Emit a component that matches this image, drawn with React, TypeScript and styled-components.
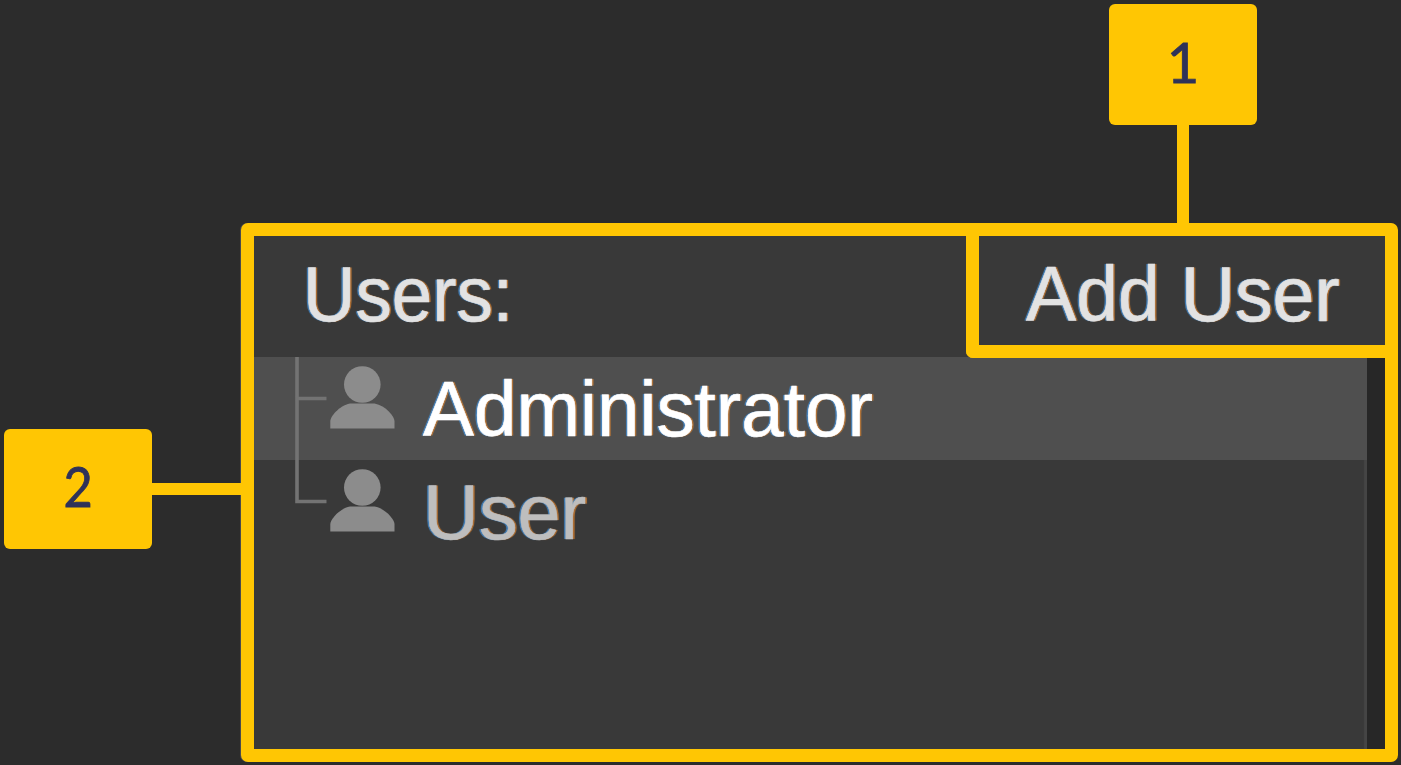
import React from "react";
import styled, { createGlobalStyle } from "styled-components";

const yellow = "#ffc603";

const GlobalStyle = createGlobalStyle`
  *, *::before, *::after { box-sizing: border-box; }
  body { margin: 0; background: #2c2c2c; overflow: hidden; }
`;

const Page = styled.div`
  width: 1401px;
  height: 765px;
  padding: 4px 0 0 4px;
  display: flex;
  flex-direction: column;
  background: #2c2c2c;
  font-family: "Liberation Sans", Arial, sans-serif;
  overflow: hidden;
`;

const Callout = styled.div<{ $vertical?: boolean }>`
  position: relative;
  z-index: 1;
  display: flex;
  flex: none;
  align-items: center;
  flex-direction: ${(p) => (p.$vertical ? "column" : "row")};
  align-self: flex-start;
  margin: ${(p) => (p.$vertical ? "0 0 0 1105px" : "206px 0 0")};
`;

const Badge = styled.div<{ $height: number }>`
  width: 148px;
  height: ${(p) => p.$height}px;
  padding-bottom: 6px;
  display: flex;
  align-items: center;
  justify-content: center;
  border-radius: 6px;
  background: ${yellow};
`;

const Digit = styled.span<{ $stretch: number }>`
  color: #2f3259;
  font: 400 56px/1 Lato, sans-serif;
  -webkit-text-stroke: 0.9px #2f3259;
  transform: scaleX(${(p) => p.$stretch});
`;

const Connector = styled.div<{ $vertical?: boolean }>`
  width: ${(p) => (p.$vertical ? 12 : 89)}px;
  height: ${(p) => (p.$vertical ? 98 : 12)}px;
  margin: ${(p) => (p.$vertical ? "0 1px 0 0" : "0 0 1px")};
  background: ${yellow};
`;

const Lower = styled.div`
  display: flex;
  align-items: flex-start;
`;

const Frame = styled.section`
  width: 1157px;
  height: 539px;
  flex: none;
  display: flex;
  flex-direction: column;
  border: 13px solid ${yellow};
  border-radius: 7px;
  background: #393939;
  box-shadow: -1px 0 0 #4b4b4b;
`;

const Header = styled.header`
  height: 121px;
  flex: none;
  display: flex;
  justify-content: space-between;
  align-items: flex-start;
  padding-left: 49px;
`;

const Label = styled.span<{ $color: string; $stretch: number }>`
  display: inline-block;
  color: ${(p) => p.$color};
  font-size: 78px;
  line-height: 88px;
  white-space: pre;
  transform: scaleX(${(p) => p.$stretch});
  transform-origin: left center;
  -webkit-text-stroke: 0.6px ${(p) => p.$color};
  text-shadow: -1.8px 0 0.8px rgba(70, 150, 225, 0.75), 1.8px 0 0.8px rgba(215, 130, 50, 0.75);
`;

const Title = styled.h1`
  margin: 14px 0 0;
  font-size: 78px;
  font-weight: 400;
  line-height: 88px;
`;

const AddUser = styled.button`
  position: relative;
  z-index: 1;
  width: 419px;
  height: 122px;
  padding: 14px 0 0 47px;
  border: 0 solid ${yellow};
  border-width: 0 0 13px 13px;
  border-radius: 0 0 0 7px;
  background: #393939;
  font-family: inherit;
  text-align: left;
  display: flex;
  align-items: flex-start;
`;

const Body = styled.div`
  flex: 1;
  display: flex;
`;

const List = styled.ul`
  flex: 1;
  margin: 0;
  padding: 0;
  list-style: none;
  box-shadow: inset -3px 0 1px #454545;
`;

const Gutter = styled.div`
  width: 18px;
  background: #272727;
`;

const Row = styled.li<{ $selected?: boolean }>`
  height: 103px;
  display: flex;
  align-items: center;
  background: ${(p) => (p.$selected ? "#4f4f4f" : "transparent")};
`;

const Branch = styled.svg`
  width: 169px;
  height: 103px;
  flex: none;
  display: block;
`;

type UserRowProps = { name: string; stretch: number; selected?: boolean; last?: boolean };

function UserRow({ name, stretch, selected, last }: UserRowProps) {
  return (
    <Row $selected={selected}>
      <Branch viewBox="0 0 169 103">
        <path
          d={last ? "M43 0V41.5H72.5" : "M43 0V103M43 41.5H72.5"}
          fill="none"
          stroke="#737373"
          strokeWidth="3.6"
        />
        <circle cx="108.3" cy="27.5" r="18.3" fill="#8c8c8c" />
        <path
          d="M76.3 71.5V64C76.3 60 85 48.5 96 46.5H120.5C132 48.5 140.5 60 140.5 64V71.5Z"
          fill="#8c8c8c"
        />
      </Branch>
      <Label $color={selected ? "#ffffff" : "#bebebe"} $stretch={stretch}>
        {name}
      </Label>
    </Row>
  );
}

export default function App() {
  return (
    <>
      <GlobalStyle />
      <Page>
        <Callout $vertical>
          <Badge $height={121}>
            <Digit $stretch={1}>1</Digit>
          </Badge>
          <Connector $vertical />
        </Callout>
        <Lower>
          <Callout>
            <Badge $height={120}>
              <Digit $stretch={0.9}>2</Digit>
            </Badge>
            <Connector />
          </Callout>
          <Frame>
            <Header>
              <Title>
                <Label $color="#e2e2e2" $stretch={0.932}>Users:</Label>
              </Title>
              <AddUser>
                <Label $color="#e2e2e2" $stretch={0.964}>Add User</Label>
              </AddUser>
            </Header>
            <Body>
              <List>
                <UserRow name="Administrator" stretch={0.979} selected />
                <UserRow name="User" stretch={0.992} last />
              </List>
              <Gutter />
            </Body>
          </Frame>
        </Lower>
      </Page>
    </>
  );
}
